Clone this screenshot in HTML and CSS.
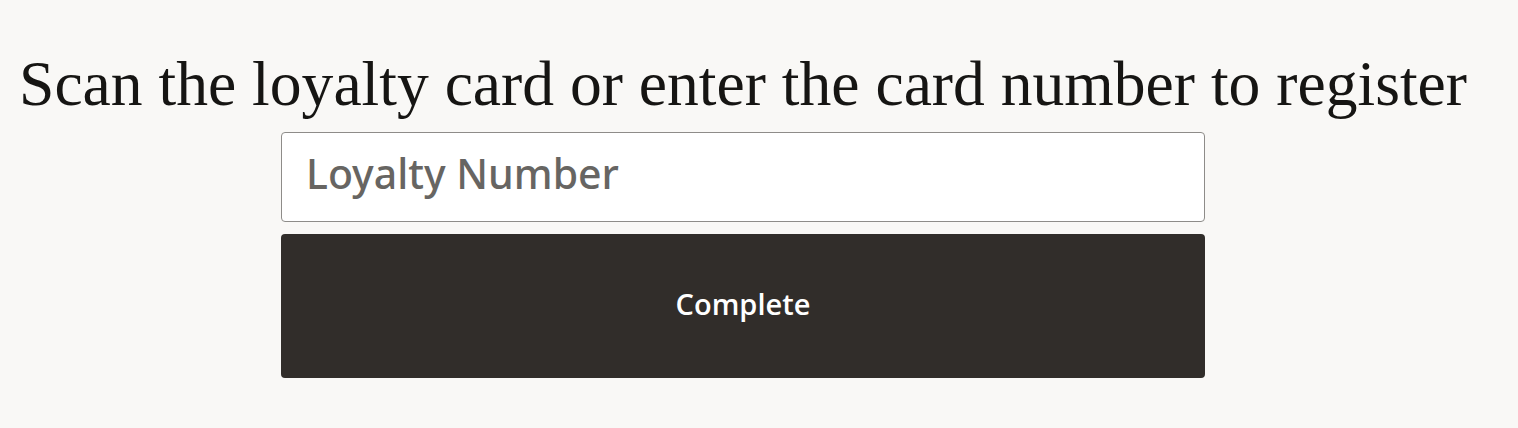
FILE: index.html
```html
<!DOCTYPE html>
<html>
<head>
<meta charset="utf-8">
<link rel="stylesheet" href="styles.css">
</head>
<body>
<main class="page">
  <h1 class="title">Scan the loyalty card or enter the card number to register</h1>
  <div class="form">
    <input class="field" type="text" placeholder="Loyalty Number">
    <button class="btn" type="button">Complete</button>
  </div>
</main>
</body>
</html>
```
FILE: styles.css
```css
html, body {
  margin: 0;
  padding: 0;
  background: #f9f8f6;
}
.page {
  width: 1486px;
  display: flex;
  flex-direction: column;
  align-items: center;
  padding-top: 48px;
}
.title {
  margin: 0;
  font-family: "Liberation Serif", "DejaVu Serif", serif;
  font-weight: normal;
  font-size: 63.6px;
  line-height: 72px;
  color: #161513;
  white-space: nowrap;
}
.form {
  width: 924px;
  display: flex;
  flex-direction: column;
  gap: 12px;
  margin-top: 12px;
}
.field {
  box-sizing: border-box;
  width: 100%;
  height: 90px;
  border: 1px solid #8e8c89;
  border-radius: 4px;
  background: #fff;
  padding: 0 24px 8px;
  font-family: "Noto Sans", "Open Sans", sans-serif;
  font-size: 41px;
  font-weight: 500;
  color: #161513;
  outline: none;
}
.field::placeholder {
  color: #676562;
  opacity: 1;
}
.btn {
  box-sizing: border-box;
  width: 100%;
  height: 144px;
  border: none;
  border-radius: 4px;
  background: #312d2a;
  color: #fff;
  padding-bottom: 6px;
  font-family: "Open Sans", "Noto Sans", sans-serif;
  font-weight: 600;
  font-size: 29px;
  cursor: pointer;
}
```
